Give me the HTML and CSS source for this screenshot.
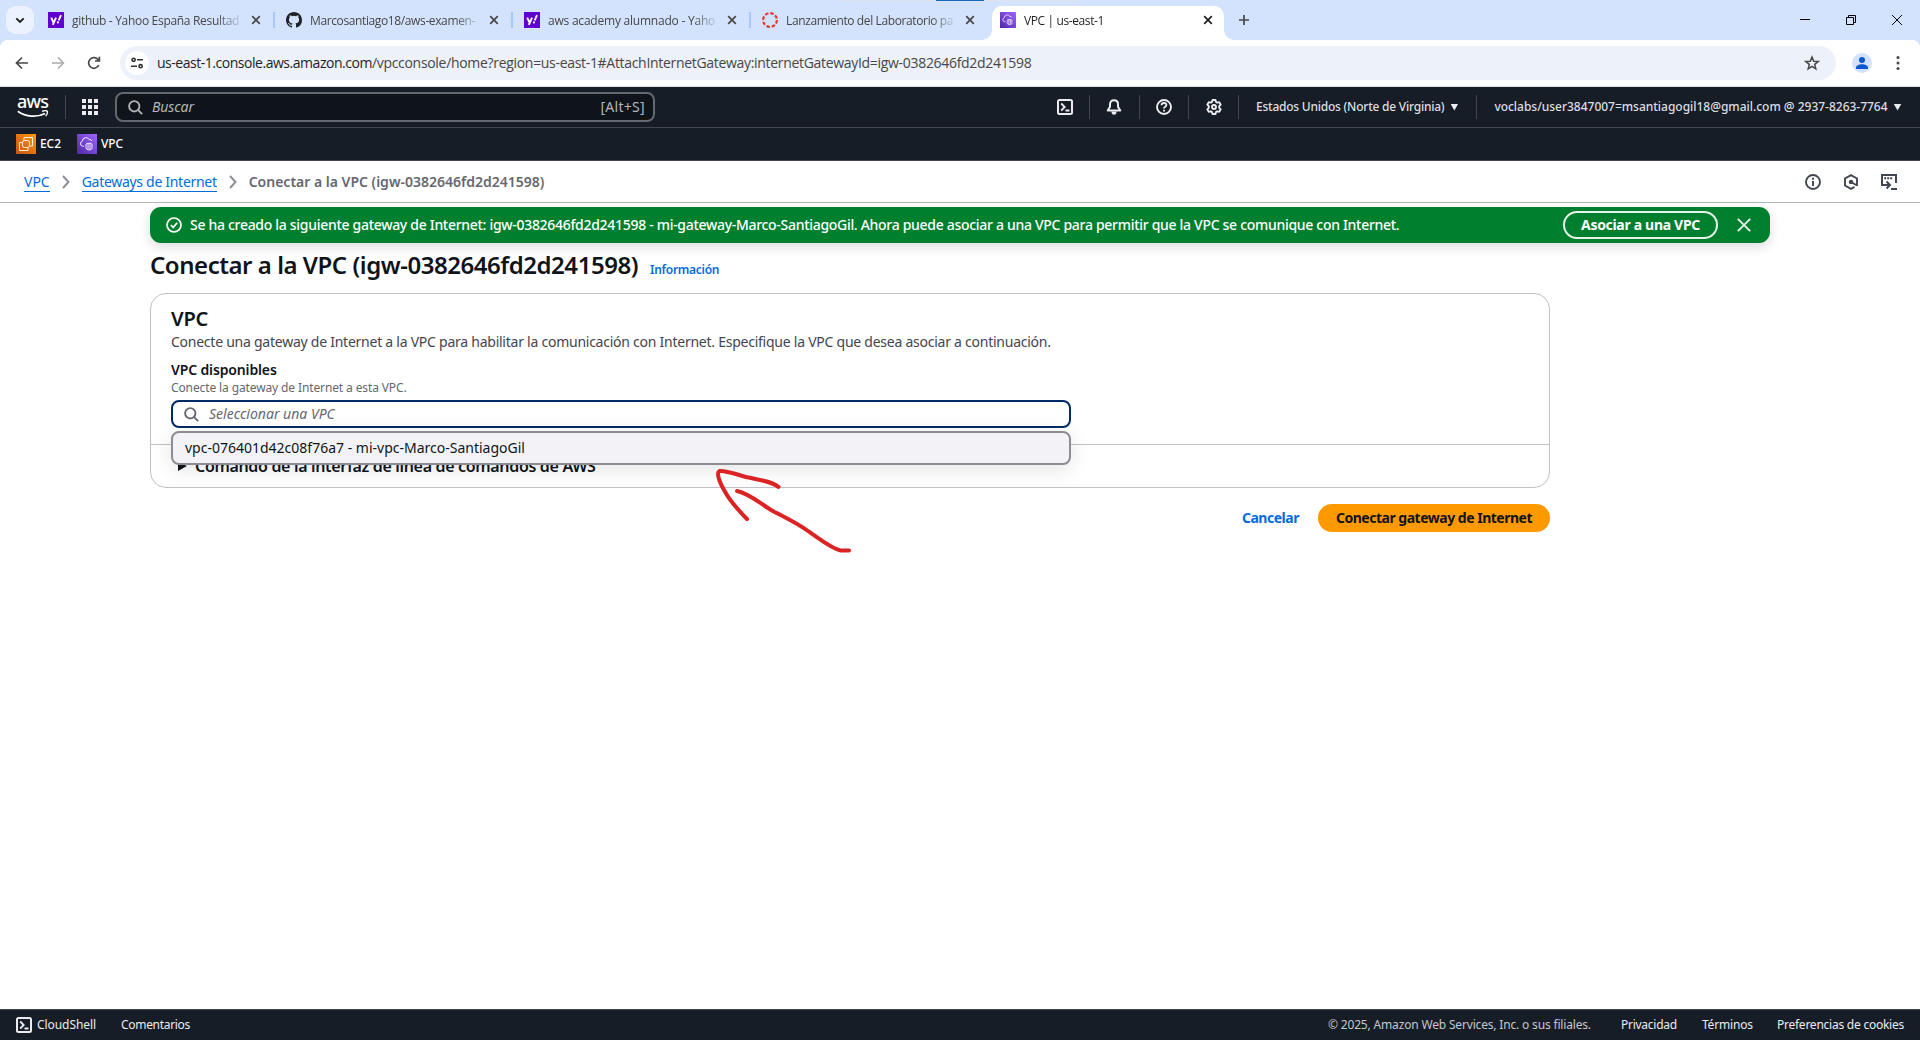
FILE: index.html
```html
<!DOCTYPE html>
<html lang="es">
<head>
<meta charset="utf-8">
<title>VPC | us-east-1</title>
<link rel="stylesheet" href="styles.css">
</head>
<body>
<svg class="defs" width="0" height="0">
  <defs>
    <linearGradient id="purple" x1="0" y1="1" x2="1" y2="0"><stop offset="0" stop-color="#4d27a8"/><stop offset="1" stop-color="#a166ff"/></linearGradient>
    <linearGradient id="orange" x1="0" y1="1" x2="1" y2="0"><stop offset="0" stop-color="#c8511b"/><stop offset="1" stop-color="#ff9900"/></linearGradient>
    <symbol id="vpc" viewBox="0 0 20 20"><rect width="20" height="20" fill="url(#purple)"/><path d="M7 12.200H5.800a2.500 2.500 0 0 1-.5-4.900A3.700 3.700 0 0 1 12.300 5.700a2.200 2.200 0 0 1 2.700 1.300" fill="none" stroke="#fff" stroke-width=".9"/><path d="M9 10.300c0-1.300 6-1.300 6 0V14c0 2.500-6 2.500-6 0zM11 10v5M13 10v5" fill="none" stroke="#fff" stroke-width=".9"/></symbol>
    <symbol id="close" viewBox="0 0 10 10"><path d="M1.200 1.200l7.600 7.600M8.800 1.200L1.200 8.800" fill="none" stroke="currentColor" stroke-width="1.700"/></symbol>
    <symbol id="yahoo" viewBox="0 0 16 16"><path fill="#6001d2" d="M0 0h16v16H0z"/><path d="M3.200 5.700l2.200 4.600M8 5.700l-3.200 7.200M13 3.200L10.700 8.400" fill="none" stroke="#fff" stroke-width="1.900"/><circle cx="9.900" cy="10.400" r="1.100" fill="#fff"/></symbol>
    <symbol id="shell" viewBox="0 0 16 16"><rect x="1" y="1" width="14" height="14" rx="1.500" fill="none" stroke="currentColor" stroke-width="2"/><path d="M4.200 4.500L7.700 8l-3.500 3.500M8.500 11.500h4" fill="none" stroke="currentColor" stroke-width="1.800"/></symbol>
    <symbol id="search" viewBox="0 0 16 16"><circle cx="6.700" cy="6.700" r="5.500" fill="none" stroke="currentColor" stroke-width="2"/><path d="M10.600 10.600l4.500 4.500" stroke="currentColor" stroke-width="2"/></symbol>
  </defs>
</svg>

<div class="tabstrip">
  <div class="topline"></div>
  <div class="tabsearch"><svg width="10" height="7" viewBox="0 0 10 7"><path d="M1.300 1.300L5 5l3.700-3.700" fill="none" stroke="#1f1f1f" stroke-width="1.900"/></svg></div>
  <div class="tab"><svg width="16" height="16"><use href="#yahoo"/></svg><span class="tab-title t1">github - Yahoo España Resultad</span><svg class="x" width="10" height="10"><use href="#close"/></svg><i></i></div>
  <div class="tab"><svg width="16" height="16" viewBox="0 0 16 16"><path fill="#1f2328" d="M8 0C3.580 0 0 3.580 0 8c0 3.540 2.290 6.530 5.470 7.590.4.070.55-.17.55-.38v-1.490c-2.010.37-2.530-.49-2.690-.94-.09-.23-.48-.94-.82-1.130-.28-.15-.68-.52-.01-.53.63-.01 1.080.58 1.230.82.72 1.210 1.870.87 2.330.66.07-.52.28-.87.51-1.070-1.780-.2-3.640-.89-3.640-3.950 0-.87.31-1.590.82-2.150-.08-.2-.36-1.020.08-2.120 0 0 .67-.21 2.200.82a7.500 7.500 0 0 1 4 0c1.530-1.040 2.200-.82 2.200-.82.44 1.100.16 1.920.08 2.120.51.56.82 1.270.82 2.150 0 3.070-1.870 3.750-3.650 3.950.29.25.54.73.54 1.480v2.200c0 .21.15.46.55.38A8 8 0 0 0 16 8c0-4.420-3.580-8-8-8z"/></svg><span class="tab-title t2">Marcosantiago18/aws-examen-</span><svg class="x" width="10" height="10"><use href="#close"/></svg><i></i></div>
  <div class="tab"><svg width="16" height="16"><use href="#yahoo"/></svg><span class="tab-title t3">aws academy alumnado - Yaho</span><svg class="x" width="10" height="10"><use href="#close"/></svg><i></i></div>
  <div class="tab"><svg width="16" height="16" viewBox="0 0 16 16"><circle cx="8" cy="8" r="6.900" fill="none" stroke="#e23b33" stroke-width="2.200" stroke-dasharray="3.600 1.820"/></svg><span class="tab-title t4">Lanzamiento del Laboratorio pa</span><svg class="x" width="10" height="10"><use href="#close"/></svg></div>
  <div class="tab active"><svg width="16" height="16"><use href="#vpc"/></svg><span class="tab-title t5">VPC | us-east-1</span><svg class="x" width="10" height="10"><use href="#close"/></svg></div>
  <svg class="newtab" width="12" height="12"><path d="M6 1v10M1 6h10" stroke="#444746" stroke-width="1.700"/></svg>
  <div class="winctl">
    <svg width="10" height="10"><path d="M0 4.500h10" stroke="#000"/></svg>
    <svg width="10" height="10"><path d="M.5 2.500h7v7h-7zM2.500 2.500v-2h7v7h-2" fill="none" stroke="#000"/></svg>
    <svg width="10" height="10"><path d="M0 0l10 10M10 0L0 10" stroke="#000"/></svg>
  </div>
</div>

<div class="toolbar">
  <svg class="back" width="14" height="14" viewBox="0 0 14 14"><path d="M13 7H2M7 1.500L1.500 7 7 12.500" fill="none" stroke="#474747" stroke-width="1.700"/></svg>
  <svg class="fwd" width="14" height="14" viewBox="0 0 14 14"><path d="M1 7h11M7 1.500L12.500 7 7 12.500" fill="none" stroke="#aaa" stroke-width="1.500"/></svg>
  <svg class="reload" width="14" height="14" viewBox="0 0 14 14"><path d="M11.800 9A5.300 5.300 0 1 1 11.300 4M12.400 .8V5H8" fill="none" stroke="#474747" stroke-width="1.700"/></svg>
  <div class="omnibox">
    <div class="siteinfo"><svg width="12" height="12" viewBox="0 0 12 12"><g fill="none" stroke="#333" stroke-width="1.600"><circle cx="2.600" cy="2.800" r="1.600"/><path d="M6 2.800h6M0 9.200h6"/><circle cx="9.600" cy="9.200" r="1.600"/></g></svg></div>
    <span class="host">us-east-1.console.aws.amazon.com</span><span class="path">/vpcconsole/home?region=us-east-1#AttachInternetGateway:internetGatewayId=igw-0382646fd2d241598</span>
    <svg class="star" width="16" height="16" viewBox="0 0 16 16"><path d="M8 2l1.700 4.200 4.500.3-3.500 2.900 1.100 4.400L8 11.400l-3.800 2.400 1.100-4.400L1.800 6.500l4.500-.3z" fill="none" stroke="#474747" stroke-width="1.500"/></svg>
  </div>
  <svg class="avatar" width="20" height="20"><circle cx="10" cy="10" r="10" fill="#d3e3fd"/><circle cx="10" cy="7" r="3" fill="#0b57d0"/><path d="M4 16v-1.500c0-2 3-3.300 6-3.300s6 1.300 6 3.300V16z" fill="#0b57d0"/></svg>
  <svg class="kebab" width="4" height="16" fill="#474747"><circle cx="2" cy="2.500" r="1.500"/><circle cx="2" cy="8" r="1.500"/><circle cx="2" cy="13.500" r="1.500"/></svg>
</div>

<header class="nav">
  <div class="logo"><span>aws</span><svg width="32" height="8" viewBox="0 0 32 8"><path d="M.8 1.200C9 7.300 20 7.600 28 3.400" fill="none" stroke="#fff" stroke-width="1.700"/><path d="M25 1.400c2-.8 4.500-.8 5.200-.3.500.8-.2 3.300-1.600 5" fill="none" stroke="#fff" stroke-width="1.300"/></svg></div>
  <div class="vr v0"></div>
  <svg class="grid" width="16" height="16" fill="#ebebf0"><path d="M0 0h4v4H0zM6 0h4v4H6zM12 0h4v4h-4zM0 6h4v4H0zM6 6h4v4H6zM12 6h4v4h-4zM0 12h4v4H0zM6 12h4v4H6zM12 12h4v4h-4z"/></svg>
  <div class="navsearch"><svg width="15" height="15"><use href="#search"/></svg><em>Buscar</em><span>[Alt+S]</span></div>
  <div class="navicons">
    <div class="cell c1"><svg width="16" height="16"><use href="#shell"/></svg></div>
    <div class="cell c2"><svg width="16" height="16" viewBox="0 0 16 16"><path d="M8 1.200c-2.600 0-4 1.800-4 4v2.500L1.700 11.500h12.600L12 7.700V5.200c0-2.200-1.400-4-4-4z" fill="none" stroke="#ebebf0" stroke-width="2" stroke-linejoin="round"/><path d="M5.500 12.500a2.500 3.200 0 0 0 5 0z" fill="#ebebf0"/></svg></div>
    <div class="cell c3"><svg width="16" height="16" viewBox="0 0 16 16" fill="none" stroke="#ebebf0" stroke-width="1.900"><circle cx="8" cy="8" r="7"/><path d="M5.600 6.300c0-3 4.800-3 4.800-.2 0 1.700-2.400 1.500-2.400 3.400M8 10.700v1.800"/></svg></div>
    <div class="cell c4"><svg width="16" height="16" viewBox="0 0 16 16" fill="none" stroke="#ebebf0" stroke-width="1.900" stroke-linejoin="round"><path d="M6.500 1h3l.5 2 1.200.7 2-.6 1.500 2.600L13.200 7.200v1.600l1.500 1.500-1.500 2.600-2-.6-1.200.7-.5 2h-3l-.5-2-1.200-.7-2 .6-1.500-2.600 1.500-1.500V7.200L1.300 5.700l1.500-2.600 2 .6L6 3z"/><circle cx="8" cy="8" r="2"/></svg></div>
  </div>
  <span class="region">Estados Unidos (Norte de Virginia)</span><b class="tri"></b>
  <div class="vr v1"></div>
  <span class="user">voclabs/user3847007=msantiagogil18@gmail.com @ 2937-8263-7764</span><b class="tri tri2"></b>
</header>

<div class="favs">
  <svg width="20" height="20"><rect width="20" height="20" fill="url(#orange)"/><g fill="none" stroke="#fff" stroke-width=".9"><path d="M8 6.500V3.500h8.500V12H14M12 14v2.500H3.500V8.500H6"/><rect x="6.500" y="6.500" width="7" height="7" rx="2"/></g></svg><span class="ec2">EC2</span>
  <svg width="20" height="20"><use href="#vpc"/></svg><span>VPC</span>
</div>

<div class="crumbs">
  <a class="k1">VPC</a><svg width="8" height="14"><path d="M1 1l5.500 6L1 13" fill="none" stroke="#8c8c94" stroke-width="1.900"/></svg>
  <a class="k2">Gateways de Internet</a><svg width="8" height="14"><path d="M1 1l5.500 6L1 13" fill="none" stroke="#8c8c94" stroke-width="1.900"/></svg>
  <b>Conectar a la VPC (igw-0382646fd2d241598)</b>
  <div class="tools">
    <svg width="16" height="16" fill="none" stroke="#424650" stroke-width="1.900"><circle cx="8" cy="8" r="7"/><path d="M8 3.800v1.900M8 7v5"/></svg>
    <svg width="16" height="16" fill="none" stroke="#424650" stroke-width="1.900"><path d="M14 12V4.500L8 1.100 2 4.500v7l6 3.400 3.500-2M8 8l6 3.500"/><circle cx="8" cy="8" r="1.300" fill="#424650"/></svg>
    <svg width="16" height="16" fill="none" stroke="#424650" stroke-width="2"><path d="M1 12V1h14v8M3.200 4.200h2M6.200 4.200h2M9.200 4.200h2M1 11h7M5.500 7.500L9 11l-3.500 3.500M10 15h6"/></svg>
  </div>
</div>

<main>
  <div class="flash">
    <svg width="16" height="16" fill="none" stroke="#fff" stroke-width="1.700"><circle cx="8" cy="8" r="7"/><path d="M4.800 8l2.400 2.400 4-4.600"/></svg>
    <span>Se ha creado la siguiente gateway de Internet: igw-0382646fd2d241598 - mi-gateway-Marco-SantiagoGil. Ahora puede asociar a una VPC para permitir que la VPC se comunique con Internet.</span>
    <button class="assoc">Asociar a una VPC</button>
    <svg class="dismiss" width="14" height="14"><path d="M.8.800l12.400 12.400M13.200.800L.8 13.200" stroke="#e5f3e9" stroke-width="1.900"/></svg>
  </div>
  <div class="heading"><h1>Conectar a la VPC (igw-0382646fd2d241598)</h1><a>Información</a></div>
  <section class="card">
    <div class="body">
      <h2>VPC</h2>
      <p class="desc">Conecte una gateway de Internet a la VPC para habilitar la comunicación con Internet. Especifique la VPC que desea asociar a continuación.</p>
      <p class="label">VPC disponibles</p>
      <p class="hint">Conecte la gateway de Internet a esta VPC.</p>
      <div class="field"><svg width="15" height="15"><use href="#search"/></svg><em>Seleccionar una VPC</em>
        <div class="option">vpc-076401d42c08f76a7 - mi-vpc-Marco-SantiagoGil</div>
      </div>
    </div>
    <div class="cli"><svg width="9" height="10"><path d="M0 1.500l9 3.500-9 5z" fill="#0f141a"/></svg><b>Comando de la interfaz de línea de comandos de AWS</b></div>
  </section>
  <div class="actions"><a>Cancelar</a><button>Conectar gateway de Internet</button></div>
</main>

<footer>
  <svg width="16" height="16"><use href="#shell"/></svg><span class="f1">CloudShell</span><span class="f2">Comentarios</span>
  <span class="f3">© 2025, Amazon Web Services, Inc. o sus filiales.</span><span class="f4">Privacidad</span><span class="f5">Términos</span><span class="f6">Preferencias de cookies</span>
</footer>

<svg class="arrow" width="150" height="100" viewBox="710 460 150 100" fill="none" stroke="#dc2323" stroke-width="4" stroke-linecap="round" stroke-linejoin="round"><path d="M778.500 487C772 481 759 480 746 477C735 474 725 470 719.500 471C716 473 719.500 482 724 490C731 503 739 511 747 519"/><path d="M737 491C750 494 758 502 771 510C784 517 797 523 808 531C819 539 834 550 841 550.500L849 550.500"/></svg>
</body>
</html>
```
FILE: styles.css
```css
* { box-sizing: border-box; }
body { margin: 0; width: 1920px; height: 1040px; overflow: hidden; display: flex; flex-direction: column; background: #fff; color: #0f141a; font: 14px/20px "Noto Sans", sans-serif; position: relative; }
svg { display: block; flex: none; }
.defs { position: absolute; }
span, a, em, b { white-space: nowrap; }
h1, h2, p { margin: 0; white-space: nowrap; }

.tabstrip { height: 40px; background: #d3e3fd; display: flex; align-items: center; padding-left: 6px; position: relative; font: 12px/20px "Open Sans", sans-serif; color: #474747; flex: none; }
.topline { position: absolute; left: 840px; top: 0; width: 240px; height: 1px; background: linear-gradient(90deg, #dce4ee 96px, #1a68b5 96px, #1a68b5 144px, #dce4ee 144px); }
.tabsearch { width: 28px; height: 28px; border-radius: 10px; background: #edf3fe; display: flex; align-items: center; justify-content: center; margin-right: 6px; }
.tab { width: 238px; height: 40px; padding-left: 8px; display: flex; align-items: center; flex: none; }
.tab-title { width: 168px; margin: 2px 11px 0 8px; -webkit-mask-image: linear-gradient(90deg, #000 145px, transparent 172px); mask-image: linear-gradient(90deg, #000 145px, transparent 172px); }
.t1 { letter-spacing: -.31px; }
.t2 { letter-spacing: -.38px; }
.t3 { letter-spacing: -.22px; }
.t4 { letter-spacing: -.38px; }
.t5 { letter-spacing: -.39px; color: #1f1f1f; }
.tab i { width: 2px; height: 16px; background: #a8c7fa; margin-left: 12px; }
.tab.active { width: 232px; height: 34px; margin-top: 6px; background: #fff; border-radius: 10px 10px 0 0; position: relative; color: #1f1f1f; padding-bottom: 6px; }
.tab.active::before, .tab.active::after { content: ""; position: absolute; bottom: 0; width: 10px; height: 10px; }
.tab.active::before { left: -10px; background: radial-gradient(circle at 0 0, transparent 9.500px, #fff 10px); }
.tab.active::after { right: -10px; background: radial-gradient(circle at 100% 0, transparent 9.500px, #fff 10px); }
.newtab { margin-left: 14px; }
.winctl { margin-left: auto; display: flex; gap: 36px; padding-right: 18px; }

.toolbar { height: 47px; padding-bottom: 1px; display: flex; align-items: center; padding-left: 15px; border-bottom: 1px solid #dfe1e6; flex: none; background: radial-gradient(circle at 8px 8px, #fff 8px, #d3e3fd 8px) 0 0/8px 8px no-repeat, radial-gradient(circle at 0 8px, #fff 8px, #d3e3fd 8px) 100% 0/8px 8px no-repeat, #fff; }
.fwd { margin-left: 22px; }
.reload { margin-left: 22px; }
.omnibox { width: 1716px; height: 34px; border-radius: 17px; margin-left: 19px; background: #ecf1fa; display: flex; align-items: center; padding: 0 16px 0 5px; font: 14px/20px "Open Sans", sans-serif; }
.siteinfo { width: 24px; height: 24px; border-radius: 50%; background: #fff; display: flex; align-items: center; justify-content: center; margin-right: 8px; }
.host { color: #1f1f1f; letter-spacing: -.47px; }
.path { color: #474747; letter-spacing: -.31px; }
.star { margin-left: auto; }
.avatar { margin-left: 16px; }
.kebab { margin-left: 24px; }

.nav { height: 41px; background: #161d26; border-bottom: 1px solid #424650; display: flex; align-items: center; color: #dedee3; font-size: 12px; font-weight: 500; flex: none; }
.logo { width: 32px; margin-left: 17px; height: 40px; padding-top: 5px; }
.logo span { display: block; color: #fff; font-size: 18px; line-height: 18px; letter-spacing: -.8px; }
.logo svg { margin-top: 0; }
.vr { width: 1px; height: 24px; background: #424650; }
.v0 { margin-left: 16px; }
.grid { margin-left: 16px; }
.navsearch { margin-left: 17px; width: 540px; height: 30px; border: 2px solid #656871; border-radius: 8px; background: #0f141a; color: #b4b4bb; display: flex; align-items: center; padding: 0 8px 0 11px; font-size: 14px; font-weight: 400; }
.navsearch em { margin-left: 9px; letter-spacing: -.07px; }
.navsearch span { margin-left: auto; letter-spacing: .3px; }
.navicons { display: flex; margin-left: 385px; color: #ebebf0; }
.cell { width: 50px; height: 24px; border-right: 1px solid #424650; display: flex; align-items: center; padding-left: 17px; }
.cell.c2, .cell.c3 { padding-left: 16px; }
.cell.c3 { width: 49px; }
.region { margin-left: 17px; letter-spacing: -.23px; }
.tri { width: 8px; height: 7px; margin-left: 6px; background: #ebebf0; clip-path: polygon(0 0, 100% 0, 50% 100%); }
.v1 { margin-left: 18px; }
.user { margin-left: 17px; letter-spacing: -.02px; }

.favs { height: 33px; background: #161d26; border-bottom: 1px solid #424650; display: flex; align-items: center; padding-left: 16px; color: #fff; font-size: 12px; font-weight: 500; flex: none; }
.favs span { margin-left: 4px; letter-spacing: -.06px; }
.favs .ec2 { margin-right: 16px; }

.crumbs { height: 42px; border-bottom: 1px solid #b4b4bb; display: flex; align-items: center; padding: 0 23px 0 24px; flex: none; }
.crumbs a { color: #006ce0; border-bottom: 1px solid #006ce0; line-height: 19px; }
.crumbs svg { margin-left: 12px; }
.crumbs .k2 { margin-left: 12px; letter-spacing: -.3px; }
.crumbs b { margin-left: 12px; font-weight: 600; color: #656871; letter-spacing: 0; }
.tools { margin-left: auto; display: flex; gap: 22px; }
.crumbs .tools svg { margin: 0; }

main { flex: 1; padding: 4px 150px 0; }
.flash { height: 36px; background: #00802f; border-radius: 11px; display: flex; align-items: center; padding: 0 19px 0 16px; color: #fff; font-weight: 500; box-shadow: 0 4px 12px rgba(0, 7, 22, .14); }
.flash span { margin-left: 8px; letter-spacing: -.3px; }
.assoc { margin-left: auto; width: 155px; height: 28px; border: 2px solid #e5f3e9; border-radius: 14px; background: none; color: #fff; font: 700 14px/20px "Noto Sans", sans-serif; letter-spacing: -.31px; padding: 0; white-space: nowrap; }
.dismiss { margin-left: 19px; }
.heading { height: 50px; display: flex; align-items: baseline; padding-top: 7px; }
h1 { font-size: 24px; line-height: 30px; font-weight: 600; letter-spacing: -.46px; }
.heading a { margin-left: 12px; color: #006ce0; font-size: 12px; font-weight: 600; letter-spacing: -.27px; }
.card { width: 1400px; height: 195px; border: 1px solid #c1c1c7; border-radius: 16px; }
.body { height: 151px; padding: 13px 20px 0; border-bottom: 1px solid #c1c1c7; }
h2 { font-size: 20px; line-height: 24px; font-weight: 600; letter-spacing: -.23px; }
.desc { color: #424650; letter-spacing: -.248px; margin-top: 1px; }
.label { font-weight: 600; letter-spacing: -.14px; margin-top: 8px; }
.hint { font-size: 12px; line-height: 16px; color: #656871; letter-spacing: -.12px; }
.field { margin-top: 4px; width: 900px; height: 28px; border: 2px solid #002b66; border-radius: 8px; background: #fff; display: flex; align-items: center; padding-left: 11px; color: #656871; position: relative; }
.field em { margin-left: 10px; }
.option { position: absolute; left: -2px; top: 29px; width: 900px; height: 34px; border: 2px solid #8c8c94; border-radius: 8px; background: #f3f3f7; color: #0f141a; line-height: 30px; padding-left: 12px; box-shadow: 0 4px 20px 1px rgba(0, 7, 22, .1); white-space: nowrap; }
.cli { display: flex; align-items: center; height: 42px; padding: 0 0 0 27px; }
.cli b { margin-left: 8px; font-size: 16px; font-weight: 600; letter-spacing: -.33px; }
.actions { width: 1400px; display: flex; align-items: center; justify-content: flex-end; margin-top: 16px; font-weight: 700; }
.actions a { color: #006ce0; letter-spacing: -.48px; margin-right: 19px; }
.actions button { width: 232px; height: 28px; border: 0; border-radius: 14px; background: #f90; color: #0f141a; font: 700 14px/20px "Noto Sans", sans-serif; letter-spacing: -.49px; padding: 0; white-space: nowrap; }

footer { height: 31px; background: #161d26; border-top: 1px solid #424650; display: flex; align-items: center; padding: 0 16px; color: #ebebf0; font-size: 12px; flex: none; }
.f1 { margin-left: 5px; letter-spacing: -.07px; }
.f2 { margin-left: 25px; letter-spacing: -.31px; }
.f3 { margin-left: auto; letter-spacing: -.17px; color: #c6c6cd; }
.f4 { margin-left: 30px; letter-spacing: -.25px; }
.f5 { margin-left: 25px; letter-spacing: -.16px; }
.f6 { margin-left: 24px; letter-spacing: -.24px; }
.arrow { position: absolute; left: 710px; top: 460px; }
```
